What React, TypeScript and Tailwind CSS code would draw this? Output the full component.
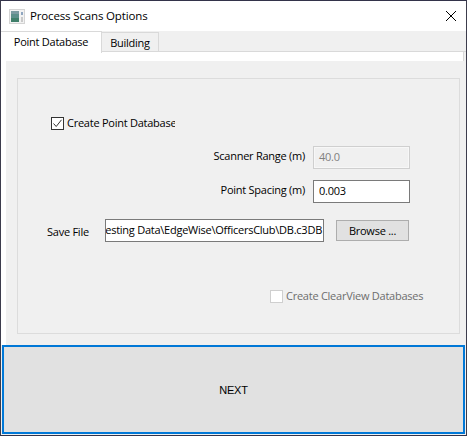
const font = "[font-family:'Open_Sans','Noto_Sans',sans-serif]";

function AppIcon() {
  return (
    <svg width="16" height="15" viewBox="0 0 16 15" className="ml-[8px] mr-[5px] shrink-0">
      <rect x="0" y="0" width="16" height="15" fill="#d4d4d4" />
      <rect x="1" y="1" width="14" height="13" fill="#f2f2f2" />
      <rect x="2" y="2" width="8" height="11" fill="#5c8f8a" />
      <rect x="2" y="2" width="8" height="3" fill="#7a9aa0" />
      <rect x="2" y="9" width="8" height="4" fill="#3f7f6a" />
      <rect x="12" y="3" width="2" height="3" fill="#8fa6c0" />
      <rect x="12" y="8" width="2" height="5" fill="#c9c9c9" />
    </svg>
  );
}

function FieldRow({ label, className, children }: { label: string; className?: string; children: React.ReactNode }) {
  return (
    <div className={`flex items-center justify-end ${className ?? ""}`}>
      <span className="mr-[8px] -translate-y-[2px]">{label}</span>
      {children}
    </div>
  );
}

export default function App() {
  return (
    <div className={`${font} flex h-[436px] w-[467px] flex-col overflow-hidden border-x border-y border-x-[#3c3c4c] border-y-[#33334a] bg-[#f0f0f0] text-[11px] leading-[16px] tracking-[-0.25px] text-black`}>
      {/* title bar */}
      <div className="flex h-[30px] shrink-0 items-center bg-white">
        <AppIcon />
        <span className="text-[11.5px] tracking-[-0.15px]">Process Scans Options</span>
        <svg width="12" height="12" viewBox="0 0 12 12" className="ml-auto mr-[9px]">
          <path d="M1 1 L11 11 M11 1 L1 11" stroke="#000" strokeWidth="1" fill="none" />
        </svg>
      </div>

      {/* tabs */}
      <div className="relative flex h-[21px] shrink-0 items-end border-b border-[#d9d9d9] pr-[2px]">
        <div className="absolute left-0 top-0 z-10 flex h-[22px] w-[101px] items-center justify-center border-r border-t border-[#d9d9d9] bg-white pb-[2px]">
          Point Database
        </div>
        <div className="ml-[101px] flex h-[19px] w-[57px] items-center justify-center border-r border-t border-[#d9d9d9] bg-[#f0f0f0] pt-[1px]">
          Building
        </div>
      </div>

      {/* tab page */}
      <div className="flex min-h-0 flex-1 flex-col">
        <div className="mr-[2px] h-[9px] shrink-0 border-r border-[#d9d9d9] bg-white" />
        <div className="flex min-h-0 flex-1 bg-[#f0f0f0]">
          <div className="w-[5px] shrink-0 bg-white" />
          <div className="min-w-0 flex-1 pb-[10px] pl-[11px] pr-[6px] pt-[17px]">
            <div className="flex h-[256px] flex-col border border-[#dcdcdc] pl-[33px] pr-[49px]">
              <label className="mt-[36px] flex h-[16px] items-center">
                <span className="flex h-[13px] w-[13px] items-center justify-center border border-[#333] bg-white">
                  <svg width="11" height="11" viewBox="0 0 11 11">
                    <path d="M1.5 5.5 L4.2 8.5 L9.5 1.8" stroke="#333" strokeWidth="1" fill="none" />
                  </svg>
                </span>
                <span className="ml-[3px] w-[108px] overflow-hidden whitespace-nowrap">Create Point Database</span>
              </label>

              <FieldRow label="Scanner Range (m)" className="mt-[15px]">
                <div className="flex h-[23px] w-[97px] items-center border border-[#cfcfcf] bg-[#f0f0f0] pb-[1px] pl-[5px] text-[#808080] shadow-[inset_0_0_0_1px_#f7f7f7]">40.0</div>
              </FieldRow>

              <FieldRow label="Point Spacing (m)" className="mt-[11px]">
                <div className="flex h-[23px] w-[97px] items-center border border-[#7a7a7a] bg-white pb-[2px] pl-[5px]">0.003</div>
              </FieldRow>

              <div className="mt-[16px] flex items-center">
                <span className="-ml-[4px] mr-[4px] w-[54px] shrink-0 translate-y-[1px] whitespace-nowrap">Save File</span>
                <div className="flex h-[23px] w-[219px] shrink-0 items-center justify-end overflow-hidden whitespace-nowrap border border-[#7a7a7a] bg-white pb-[2px] pr-[1px]">
                  esting Data\EdgeWise\OfficersClub\DB.c3DB
                </div>
                <button className="ml-[12px] flex h-[21px] w-[73px] items-center justify-center border border-[#adadad] bg-[#e1e1e1]">Browse ...</button>
              </div>

              <label className="ml-[219px] mt-[46px] flex h-[16px] items-center whitespace-nowrap text-[#6d6d6d]">
                <span className="h-[13px] w-[13px] shrink-0 border border-[#cfcfcf] bg-white" />
                <span className="ml-[3px]">Create ClearView Databases</span>
              </label>
            </div>
          </div>
        </div>

        {/* next */}
        <div className="px-[1px] pb-[1px]">
          <button className="flex h-[89px] w-full items-center justify-center border-2 border-[#0078d7] bg-[#e1e1e1] text-[11px] tracking-[-0.2px] [font-family:'Liberation_Sans',Arial,sans-serif]">
            NEXT
          </button>
        </div>
      </div>
    </div>
  );
}
